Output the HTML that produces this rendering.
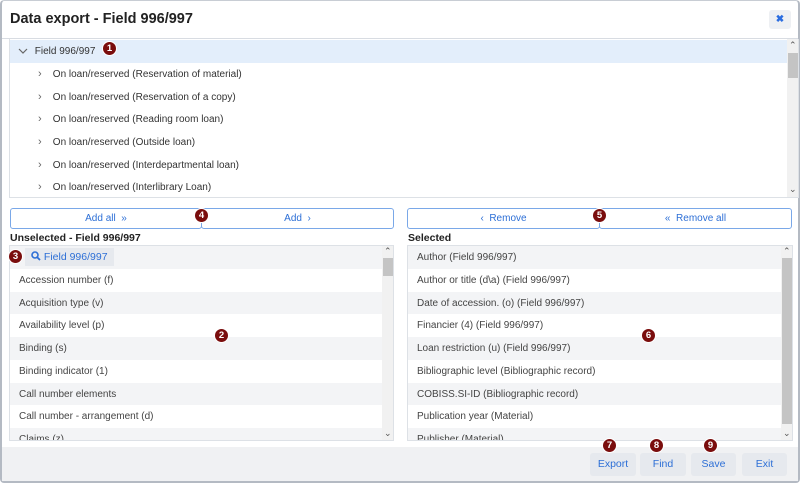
<!DOCTYPE html>
<html><head><style>
*{box-sizing:border-box;margin:0;padding:0}
body{width:800px;height:483px;overflow:hidden;background:#fff;font-family:"Liberation Sans",Arial,sans-serif;font-size:10px;color:#333;position:relative}
.a{position:absolute}
.frame{left:0;top:0;width:800px;height:483px;border:2px solid #b4bac3;border-top:1px solid #c8cdd4;border-radius:4px}
.title{left:10px;top:11px;font-size:14.5px;font-weight:bold;color:#222}
.close{left:769px;top:10px;width:22px;height:19px;background:#eef0f3;border-radius:3px;color:#2b6de0;font-size:10px;font-weight:bold;text-align:center;line-height:19px}
.hdrline{left:2px;top:38px;width:796px;height:1px;background:#d8dce2}
.tree{left:9px;top:39px;width:790px;height:159px;border:1px solid #dde1e6;border-top:none;overflow:hidden}
.tr{position:absolute;left:0;width:777px;height:23px;line-height:23px;font-size:10px}
.sb{position:absolute;background:#f1f1f1}
.thumb{position:absolute;background:#c4c4c4}
.btn{height:21px;border:1px solid #7aa8e8;border-radius:3px;color:#2d6fd6;text-align:center;line-height:19px;font-size:10px;background:#fff}
.lbl{font-weight:bold;font-size:10.5px;color:#222}
.list{border:1px solid #dde1e6;overflow:hidden}
.row{position:absolute;left:0;height:23px;line-height:23px;padding-left:9px;font-size:10px;color:#444}
.g{background:#f3f4f6}
.w{background:#fff}
.bar{left:2px;top:447px;width:796px;height:34px;background:#f0f1f3}
.fb{top:453px;height:23px;background:#e6e9ee;border-radius:3px;color:#2d6fd6;text-align:center;line-height:23px;font-size:10.5px}
.badge{width:15px;height:15px;border-radius:50%;background:#7a0d0d;color:#fff;font-size:9.5px;font-weight:bold;text-align:center;line-height:13px;border:1px solid #fff}
.chev{color:#666;font-size:11px}
</style></head><body>
<div class="a frame"></div>
<div class="a title">Data export - Field 996/997</div>
<div class="a close">✖</div>
<div class="a hdrline"></div>
<div class="a tree">
 <div class="tr" style="top:1px;background:#e3eefb;padding-left:8px">
  <svg width="10" height="8" style="vertical-align:middle"><path d="M1 2 L5 6 L9 2" stroke="#666" fill="none" stroke-width="1.2"/></svg>
  <span style="margin-left:4px">Field 996/997</span></div>
 <div class="tr" style="top:24px;padding-left:28px"><span class="chev">&#8250;</span>&nbsp;&nbsp;&nbsp; On loan/reserved (Reservation of material)</div>
 <div class="tr" style="top:47px;padding-left:28px"><span class="chev">&#8250;</span>&nbsp;&nbsp;&nbsp; On loan/reserved (Reservation of a copy)</div>
 <div class="tr" style="top:69px;padding-left:28px"><span class="chev">&#8250;</span>&nbsp;&nbsp;&nbsp; On loan/reserved (Reading room loan)</div>
 <div class="tr" style="top:92px;padding-left:28px"><span class="chev">&#8250;</span>&nbsp;&nbsp;&nbsp; On loan/reserved (Outside loan)</div>
 <div class="tr" style="top:115px;padding-left:28px"><span class="chev">&#8250;</span>&nbsp;&nbsp;&nbsp; On loan/reserved (Interdepartmental loan)</div>
 <div class="tr" style="top:137px;padding-left:28px"><span class="chev">&#8250;</span>&nbsp;&nbsp;&nbsp; On loan/reserved (Interlibrary Loan)</div>
 <div class="sb" style="left:777px;top:0;width:12px;height:158px"></div>
 <div class="thumb" style="left:778px;top:14px;width:10px;height:25px"></div>
 <div class="a" style="left:779px;top:1px;font-size:9px;color:#555">&#8963;</div>
 <div class="a" style="left:779px;top:145px;font-size:9px;color:#555">&#8964;</div>
</div>

<div class="a btn" style="left:10px;top:208px;width:192px">Add all &nbsp;&#187;</div>
<div class="a btn" style="left:201px;top:208px;width:193px">Add &nbsp;&#8250;</div>
<div class="a btn" style="left:407px;top:208px;width:193px">&#8249; &nbsp;Remove</div>
<div class="a btn" style="left:599px;top:208px;width:193px">&#171; &nbsp;Remove all</div>

<div class="a lbl" style="left:10px;top:232px">Unselected - Field 996/997</div>
<div class="a lbl" style="left:408px;top:232px">Selected</div>

<div class="a list" style="left:9px;top:245px;width:385px;height:196px">
 <div class="row g" style="top:0;width:372px"><span style="display:inline-block;margin-left:6px;background:#e6e9ee;padding:0 6px;height:18px;line-height:18px;color:#2d6fd6;font-size:10.5px">
 <svg width="10" height="10" style="vertical-align:-1px"><circle cx="4" cy="4" r="3" stroke="#2d6fd6" stroke-width="1.6" fill="none"/><path d="M6.2 6.2 L9 9" stroke="#2d6fd6" stroke-width="1.8"/></svg> Field 996/997</span></div>
 <div class="row w" style="top:23px;width:372px">Accession number (f)</div>
 <div class="row g" style="top:46px;width:372px">Acquisition type (v)</div>
 <div class="row w" style="top:68px;width:372px">Availability level (p)</div>
 <div class="row g" style="top:91px;width:372px">Binding (s)</div>
 <div class="row w" style="top:114px;width:372px">Binding indicator (1)</div>
 <div class="row g" style="top:137px;width:372px">Call number elements</div>
 <div class="row w" style="top:159px;width:372px">Call number - arrangement (d)</div>
 <div class="row g" style="top:182px;width:372px">Claims (z)</div>
 <div class="sb" style="left:372px;top:0;width:12px;height:196px"></div>
 <div class="thumb" style="left:373px;top:12px;width:10px;height:18px"></div>
 <div class="a" style="left:374px;top:0;font-size:9px;color:#555">&#8963;</div>
 <div class="a" style="left:374px;top:182px;font-size:9px;color:#555">&#8964;</div>
</div>

<div class="a list" style="left:407px;top:245px;width:386px;height:196px">
 <div class="row g" style="top:0;width:373px">Author (Field 996/997)</div>
 <div class="row w" style="top:23px;width:373px">Author or title (d\a) (Field 996/997)</div>
 <div class="row g" style="top:46px;width:373px">Date of accession. (o) (Field 996/997)</div>
 <div class="row w" style="top:68px;width:373px">Financier (4) (Field 996/997)</div>
 <div class="row g" style="top:91px;width:373px">Loan restriction (u) (Field 996/997)</div>
 <div class="row w" style="top:114px;width:373px">Bibliographic level (Bibliographic record)</div>
 <div class="row g" style="top:137px;width:373px">COBISS.SI-ID (Bibliographic record)</div>
 <div class="row w" style="top:159px;width:373px">Publication year (Material)</div>
 <div class="row g" style="top:182px;width:373px">Publisher (Material)</div>
 <div class="sb" style="left:373px;top:0;width:12px;height:196px"></div>
 <div class="thumb" style="left:374px;top:12px;width:10px;height:166px"></div>
 <div class="a" style="left:375px;top:0;font-size:9px;color:#555">&#8963;</div>
 <div class="a" style="left:375px;top:182px;font-size:9px;color:#555">&#8964;</div>
</div>

<div class="a bar"></div>
<div class="a fb" style="left:590px;width:46px">Export</div>
<div class="a fb" style="left:640px;width:46px">Find</div>
<div class="a fb" style="left:691px;width:45px">Save</div>
<div class="a fb" style="left:742px;width:45px">Exit</div>

<div class="a badge" style="left:102px;top:41px">1</div>
<div class="a badge" style="left:214px;top:328px">2</div>
<div class="a badge" style="left:8px;top:249px">3</div>
<div class="a badge" style="left:194px;top:208px">4</div>
<div class="a badge" style="left:592px;top:208px">5</div>
<div class="a badge" style="left:641px;top:328px">6</div>
<div class="a badge" style="left:602px;top:438px">7</div>
<div class="a badge" style="left:649px;top:438px">8</div>
<div class="a badge" style="left:703px;top:438px">9</div>
</body></html>
